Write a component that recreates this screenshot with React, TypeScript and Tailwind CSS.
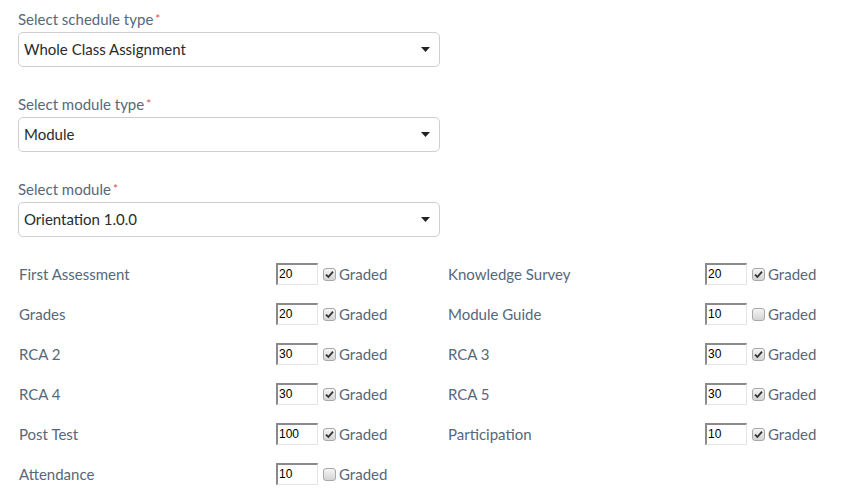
import React from 'react';

const selects = [
  { label: 'Select schedule type', value: 'Whole Class Assignment' },
  { label: 'Select module type', value: 'Module' },
  { label: 'Select module', value: 'Orientation 1.0.0' },
];

const items = [
  { name: 'First Assessment', score: '20', graded: true },
  { name: 'Knowledge Survey', score: '20', graded: true },
  { name: 'Grades', score: '20', graded: true },
  { name: 'Module Guide', score: '10', graded: false },
  { name: 'RCA 2', score: '30', graded: true },
  { name: 'RCA 3', score: '30', graded: true },
  { name: 'RCA 4', score: '30', graded: true },
  { name: 'RCA 5', score: '30', graded: true },
  { name: 'Post Test', score: '100', graded: true },
  { name: 'Participation', score: '10', graded: true },
  { name: 'Attendance', score: '10', graded: false },
];

function Check({ checked }: { checked: boolean }) {
  return (
    <span className="w-[13px] h-[13px] rounded-[3px] border border-[#a9a9a9] bg-gradient-to-b from-[#f4f4f4] to-[#d4d4d4] flex items-center justify-center">
      {checked && (
        <svg width="9" height="9" viewBox="0 0 9 9">
          <path d="M1 4.6 L3.4 7 L8 1.6" fill="none" stroke="#333" strokeWidth="1.8" />
        </svg>
      )}
    </span>
  );
}

export default function App() {
  return (
    <div className="bg-white w-[849px] h-[500px] px-[18px] pt-[8px] font-['Lato',sans-serif] text-[15px] text-[#56687a]">
      <div className="flex flex-col gap-[26px]">
        {selects.map((s) => (
          <div key={s.label}>
            <div className="h-[22px] leading-[22px] mb-[2px]">
              {s.label}
              <span className="text-[#d9534f] text-[12px] align-top ml-[2px]">*</span>
            </div>
            <div className="w-[422px] h-[35px] border border-[#cfcfcf] rounded-[5px] flex items-center justify-between pl-[5px] pr-[9px] text-[#2a2a2a]">
              <span>{s.value}</span>
              <svg width="9" height="5" viewBox="0 0 9 5">
                <path d="M0 0 H9 L4.5 5 Z" fill="#222" />
              </svg>
            </div>
          </div>
        ))}
      </div>
      <div className="grid grid-cols-[429px_429px] mt-[17px]">
        {items.map((it) => (
          <div key={it.name} className="flex items-center h-[40px] pl-[1px]">
            <span className="w-[257px]">{it.name}</span>
            <span className="w-[42px] h-[22px] border-t-2 border-l-2 border-t-[#8a8a8a] border-l-[#8a8a8a] border-b border-r border-b-[#e4e4e4] border-r-[#e4e4e4] pl-[1px] text-[12px] leading-[19px] text-black font-['Liberation_Sans',sans-serif]">
              {it.score}
            </span>
            <span className="ml-[5px] mr-[3px]">
              <Check checked={it.graded} />
            </span>
            <span>Graded</span>
          </div>
        ))}
      </div>
    </div>
  );
}
